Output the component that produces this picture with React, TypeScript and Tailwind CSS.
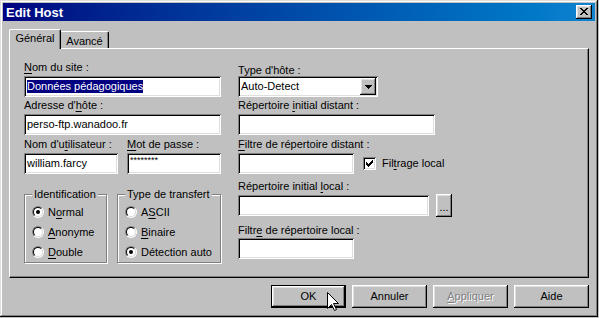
import type { ReactNode } from 'react';

const sunken =
  'bg-white shadow-[inset_1px_1px_0_#808080,inset_-1px_-1px_0_#ffffff,inset_2px_2px_0_#000000,inset_-2px_-2px_0_#dfdfdf]';
const raised =
  'bg-[#c0c0c0] shadow-[inset_-1px_-1px_0_#000000,inset_1px_1px_0_#ffffff,inset_-2px_-2px_0_#808080,inset_2px_2px_0_#dfdfdf]';

const U = ({ children }: { children: ReactNode }) => (
  <span className="underline underline-offset-[2px]">{children}</span>
);

const Label = ({ children, className = '' }: { children: ReactNode; className?: string }) => (
  <div className={`h-[13px] leading-[13px] whitespace-nowrap ${className}`}>{children}</div>
);

const Edit = ({ children, className = '' }: { children?: ReactNode; className?: string }) => (
  <div
    className={`h-[21px] ${sunken} flex items-center overflow-hidden whitespace-nowrap pl-[3px] leading-[13px] ${className}`}
  >
    {children}
  </div>
);

const Radio = ({ checked, children }: { checked?: boolean; children: ReactNode }) => (
  <div className="flex h-[20px] items-center gap-[4px] pl-[7px]">
    <div className="size-[12px] rounded-full border border-t-[#808080] border-r-white border-b-white border-l-[#808080]">
      <div className="flex size-full items-center justify-center rounded-full border border-t-black border-r-[#dfdfdf] border-b-[#dfdfdf] border-l-black bg-white">
        {checked && <div className="size-[4px] rounded-full bg-black" />}
      </div>
    </div>
    <span className="leading-[13px]">{children}</span>
  </div>
);

const Group = ({ title, className, children }: { title: string; className: string; children: ReactNode }) => (
  <div
    className={`relative border border-[#808080] pt-[7px] shadow-[inset_1px_1px_0_#ffffff,1px_1px_0_#ffffff] ${className}`}
  >
    <span className="absolute -top-[7px] left-[7px] bg-[#c0c0c0] px-[2px] leading-[13px] whitespace-nowrap">
      {title}
    </span>
    {children}
  </div>
);

const Button = ({
  children,
  primary,
  disabled,
}: {
  children: ReactNode;
  primary?: boolean;
  disabled?: boolean;
}) => (
  <div
    className={`flex h-[23px] w-[75px] items-center justify-center leading-[13px] ${raised} ${
      primary ? 'border border-black' : ''
    } ${disabled ? 'text-[#808080] [text-shadow:1px_1px_0_#ffffff]' : ''}`}
  >
    {children}
  </div>
);

const CloseGlyph = () => (
  <svg width="8" height="7" viewBox="0 0 8 7" shapeRendering="crispEdges">
    <rect x="0" y="0" width="2" height="1" />
    <rect x="6" y="0" width="2" height="1" />
    <rect x="1" y="1" width="2" height="1" />
    <rect x="5" y="1" width="2" height="1" />
    <rect x="2" y="2" width="4" height="1" />
    <rect x="3" y="3" width="2" height="1" />
    <rect x="2" y="4" width="4" height="1" />
    <rect x="1" y="5" width="2" height="1" />
    <rect x="5" y="5" width="2" height="1" />
    <rect x="0" y="6" width="2" height="1" />
    <rect x="6" y="6" width="2" height="1" />
  </svg>
);

const ArrowDown = () => (
  <svg width="7" height="4" viewBox="0 0 7 4" shapeRendering="crispEdges">
    <rect x="0" y="0" width="7" height="1" />
    <rect x="1" y="1" width="5" height="1" />
    <rect x="2" y="2" width="3" height="1" />
    <rect x="3" y="3" width="1" height="1" />
  </svg>
);

const Check = () => (
  <svg width="7" height="7" viewBox="0 0 7 7" shapeRendering="crispEdges">
    <rect x="6" y="0" width="1" height="1" />
    <rect x="5" y="1" width="2" height="1" />
    <rect x="0" y="2" width="1" height="1" />
    <rect x="4" y="2" width="3" height="1" />
    <rect x="0" y="3" width="2" height="1" />
    <rect x="3" y="3" width="3" height="1" />
    <rect x="0" y="4" width="5" height="1" />
    <rect x="1" y="5" width="3" height="1" />
    <rect x="2" y="6" width="1" height="1" />
  </svg>
);

export default function App() {
  return (
    <div className="h-[318px] w-[599px] bg-[#c0c0c0]">
      <div className="relative h-[317px] w-[598px] bg-[#c0c0c0] p-[3px] font-['Liberation_Sans',Arial,sans-serif] text-[11px] text-black shadow-[inset_-1px_-1px_0_#000000,inset_1px_1px_0_#dfdfdf,inset_-2px_-2px_0_#808080,inset_2px_2px_0_#ffffff]">
        {/* title bar */}
        <div className="flex h-[18px] items-center justify-between bg-linear-to-r from-[#000080] to-[#1084d0] pr-[3px] pl-[3px]">
          <span className="text-[13px] leading-[15px] font-bold text-white">Edit Host</span>
          <div className={`flex h-[14px] w-[16px] items-center justify-center pr-[1px] pb-[1px] ${raised}`}>
            <CloseGlyph />
          </div>
        </div>

        <div className="px-[6px]">
          {/* tabs */}
          <div className="relative z-10 mt-[8px] flex h-[19px] items-end">
            <div className="-mb-px h-[20px] w-[52px] rounded-t-[2px] border-t border-r border-l border-t-white border-r-black border-l-white bg-[#c0c0c0] pt-[2px] text-center leading-[13px] shadow-[inset_-1px_0_0_#808080]">
              Général
            </div>
            <div className="h-[17px] w-[48px] rounded-tr-[2px] border-t border-r border-t-white border-r-black pt-[3px] text-center leading-[13px] shadow-[inset_-1px_0_0_#808080]">
              Avancé
            </div>
          </div>

          {/* panel */}
          <div className="flex h-[230px] w-[580px] gap-[17px] border border-t-white border-r-black border-b-black border-l-white pt-[12px] pl-[14px] shadow-[inset_-1px_-1px_0_#808080]">
            {/* left column */}
            <div className="flex w-[197px] flex-col">
              <Label>
                <U>N</U>om du site :
              </Label>
              <Edit className="mt-[2px] w-[197px]">
                <span className="bg-[#000080] text-white">Données pédagogiques</span>
              </Edit>
              <Label className="mt-[2px]">
                Adresse d'<U>h</U>ôte :
              </Label>
              <Edit className="mt-[2px] w-[197px]">perso-ftp.wanadoo.fr</Edit>
              <div className="mt-[3px] flex gap-[9px]">
                <div className="flex flex-col">
                  <Label>
                    Nom d'u<U>t</U>ilisateur :
                  </Label>
                  <Edit className="mt-[2px] w-[94px]">william.farcy</Edit>
                </div>
                <div className="flex flex-col">
                  <Label>
                    <U>M</U>ot de passe :
                  </Label>
                  <Edit className="mt-[2px] w-[94px] items-start pt-[3px]">
                    <span className="text-[9px] leading-[9px]">********</span>
                  </Edit>
                </div>
              </div>
              <div className="mt-[20px] flex gap-[10px]">
                <Group title="Identification" className="w-[83px]">
                  <Radio checked>
                    N<U>o</U>rmal
                  </Radio>
                  <Radio>
                    <U>A</U>nonyme
                  </Radio>
                  <Radio>
                    <U>D</U>ouble
                  </Radio>
                </Group>
                <Group title="Type de transfert" className="w-[104px]">
                  <Radio>
                    A<U>S</U>CII
                  </Radio>
                  <Radio>
                    <U>B</U>inaire
                  </Radio>
                  <Radio checked>Détection auto</Radio>
                </Group>
              </div>
            </div>

            {/* right column */}
            <div className="flex flex-col">
              <div className="mt-[3px] h-[12px] leading-[13px] whitespace-nowrap">
                T<U>y</U>pe d'hôte :
              </div>
              <div className={`flex h-[21px] w-[140px] p-[2px] ${sunken}`}>
                <div className="flex flex-1 items-center pl-[1px] leading-[13px]">Auto-Detect</div>
                <div className={`flex h-[17px] w-[16px] items-center justify-center pt-[1px] ${raised}`}>
                  <ArrowDown />
                </div>
              </div>
              <Label className="mt-[2px]">
                Répertoire <U>i</U>nitial distant :
              </Label>
              <Edit className="mt-[2px] w-[197px]" />
              <Label className="mt-[3px]">
                <U>F</U>iltre de répertoire distant :
              </Label>
              <div className="mt-[2px] flex items-center">
                <Edit className="w-[116px]" />
                <div className={`ml-[9px] flex size-[13px] items-center justify-center ${sunken}`}>
                  <Check />
                </div>
                <span className="ml-[6px] leading-[13px]">
                  Fil<U>t</U>rage local
                </span>
              </div>
              <Label className="mt-[6px]">
                Répertoire initial <U>l</U>ocal :
              </Label>
              <div className="mt-[1px] flex h-[23px] items-center">
                <Edit className="w-[191px]" />
                <div className={`ml-[7px] flex h-[23px] w-[16px] items-end justify-center pb-[5px] leading-[10px] ${raised}`}>
                  ...
                </div>
              </div>
              <Label className="mt-[7px]">
                Filtr<U>e</U> de répertoire local :
              </Label>
              <Edit className="mt-[1px] w-[116px]" />
            </div>
          </div>

          {/* buttons */}
          <div className="mt-[7px] flex w-[580px] justify-end gap-[6px]">
            <Button primary>OK</Button>
            <Button>Annuler</Button>
            <Button disabled>
              <U>A</U>ppliquer
            </Button>
            <Button>Aide</Button>
          </div>
        </div>

        {/* mouse cursor */}
        <svg className="absolute top-[292px] left-[327px]" width="13" height="20" viewBox="0 0 13 20">
          <path
            d="M0.5 0.5V16.5L4.5 12.5L7.5 18.5L9.5 17.5L6.5 11.5H11.5Z"
            fill="#ffffff"
            stroke="#000000"
            strokeWidth="1"
          />
        </svg>
      </div>
    </div>
  );
}
